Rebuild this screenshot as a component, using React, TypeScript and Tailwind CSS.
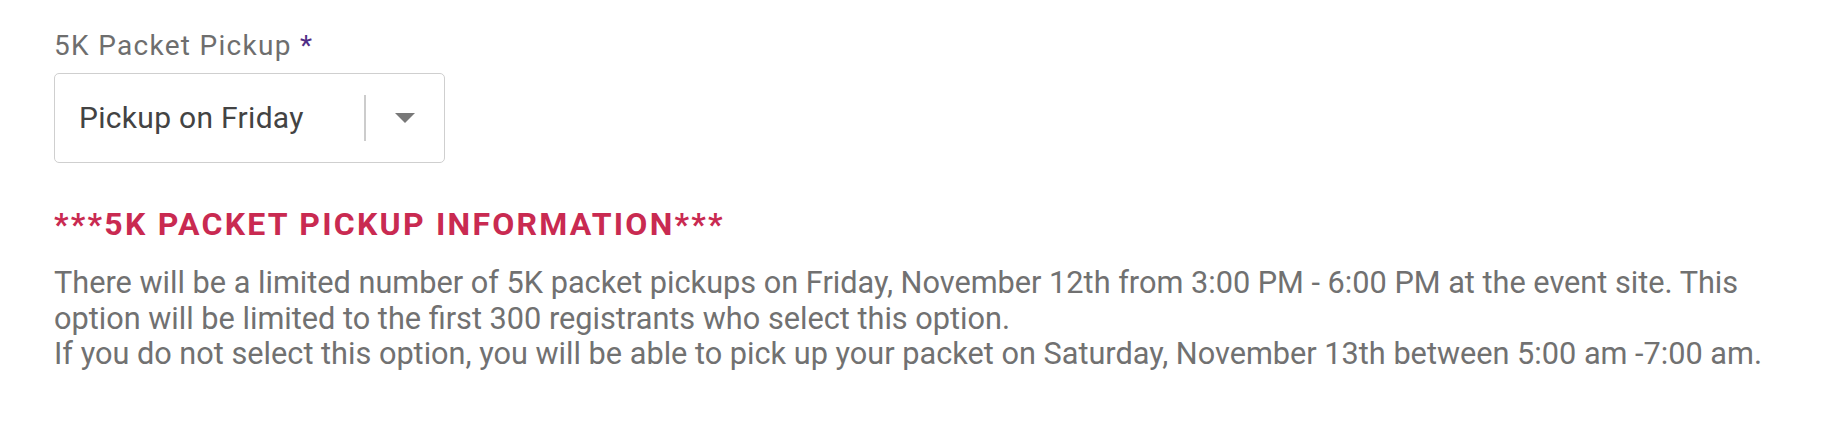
import React from 'react';

const App: React.FC = () => {
  return (
    <div className="min-h-screen bg-white px-[54px] pt-[31px] font-['Roboto',sans-serif]">
      <label className="block text-[28px] leading-[30px] tracking-[1.3px] text-[#6e6e6e]">
        5K Packet Pickup <span className="text-[#4f2d86]">*</span>
      </label>

      <div className="mt-[12px] flex h-[90px] w-[391px] items-center rounded-[5px] border border-[#cfcfcf] bg-white">
        <span className="flex-1 pl-[24px] text-[30px] leading-[36px] tracking-[0.3px] text-[#434343]">
          Pickup on Friday
        </span>
        <span className="h-[46px] w-[2px] bg-[#cccccc]" />
        <span className="flex w-[78px] justify-center">
          <svg width="20" height="10" viewBox="0 0 20 10">
            <path d="M0 0 L20 0 L10 10 Z" fill="#787878" />
          </svg>
        </span>
      </div>

      <h3 className="mt-[43px] text-[32px] font-bold leading-[36px] tracking-[2.25px] text-[#c92a51]">
        ***5K PACKET PICKUP INFORMATION***
      </h3>

      <div className="mt-[23px] text-[30.7px] leading-[35.5px] text-[#717171]">
        <p>
          There will be a limited number of 5K packet pickups on Friday, November 12th from 3:00 PM - 6:00 PM at the
          event site. This option will be limited to the first 300 registrants who select this option.
        </p>
        <p>
          If you do not select this option, you will be able to pick up your packet on Saturday, November 13th between
          5:00 am -7:00 am.
        </p>
      </div>
    </div>
  );
};

export default App;
